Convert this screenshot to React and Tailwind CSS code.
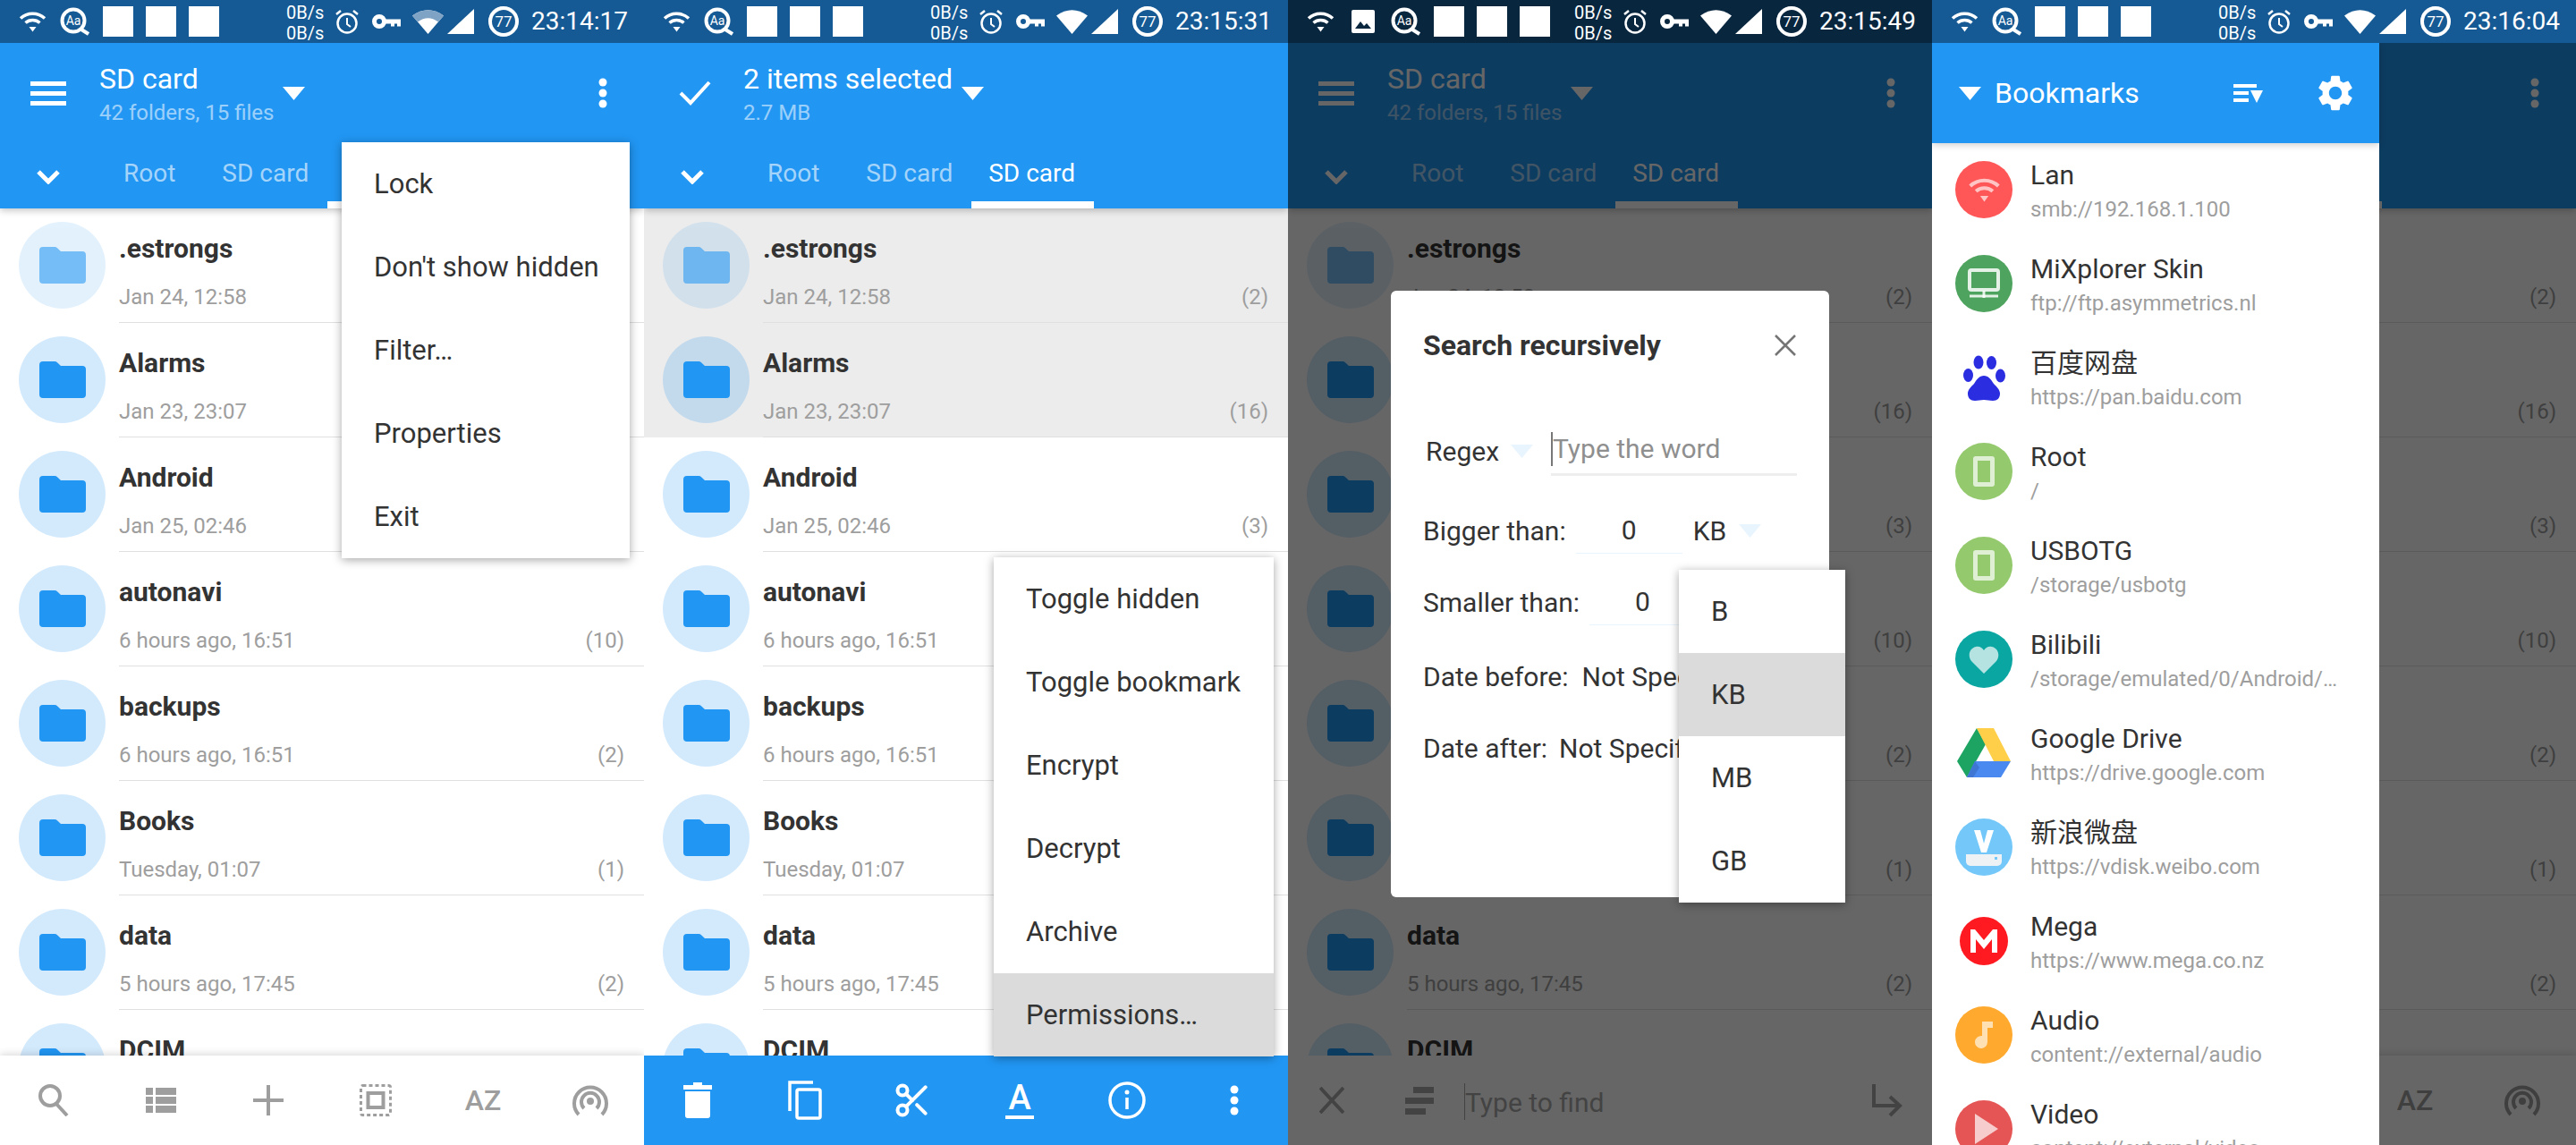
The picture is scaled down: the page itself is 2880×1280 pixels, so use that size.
import { MdSettings } from 'react-icons/md'
import { Scissors } from 'lucide-react'

const folders = [
  { name: '.estrongs', date: 'Jan 24, 12:58', count: '(2)', hidden: true },
  { name: 'Alarms', date: 'Jan 23, 23:07', count: '(16)' },
  { name: 'Android', date: 'Jan 25, 02:46', count: '(3)' },
  { name: 'autonavi', date: '6 hours ago, 16:51', count: '(10)' },
  { name: 'backups', date: '6 hours ago, 16:51', count: '(2)' },
  { name: 'Books', date: 'Tuesday, 01:07', count: '(1)' },
  { name: 'data', date: '5 hours ago, 17:45', count: '(2)' },
  { name: 'DCIM', date: '', count: '' },
]

function WifiIcon({ className = 'text-white', w = 31, h = 24 }) {
  return (
    <svg width={w} height={h} viewBox="0 0 31 24" fill="none" stroke="currentColor" className={className}>
      <path d="M2 8.5C9.5 1.5 21.5 1.5 29 8.5" strokeWidth="3.5" />
      <path d="M7.5 13.5C12 9.5 19 9.5 23.5 13.5" strokeWidth="3.5" />
      <path d="M11.5 18h8l-4 5.5z" fill="currentColor" stroke="none" />
    </svg>
  )
}

function AaIcon() {
  return (
    <svg width="34" height="32" viewBox="0 0 34 32" fill="none" className="shrink-0">
      <circle cx="15" cy="15" r="12.5" stroke="white" strokeWidth="4" />
      <path d="M24 25l8 5" stroke="white" strokeWidth="4" />
      <text x="15" y="20" textAnchor="middle" fontSize="14" fill="white">Aa</text>
    </svg>
  )
}

function StatusBar({ time, dark, fanDim, extra }) {
  return (
    <div className={`flex h-12 shrink-0 items-center pl-[21px] ${dark ? 'bg-[#09263f]' : 'bg-[#155a94]'}`}>
      <WifiIcon />
      <div className="ml-[15px] flex items-center gap-[14px]">
        {extra && (
          <svg width="34" height="26" viewBox="0 0 34 26" className="shrink-0">
            <rect x="4" width="26" height="26" rx="2" fill="white" />
            <path d="M8 21l6-8 4 5 3-3 5 6z" fill="#09263f" />
          </svg>
        )}
        <AaIcon />
        <div className="h-[34px] w-[34px] bg-white" />
        <div className="h-[34px] w-[34px] bg-white" />
        <div className="h-[34px] w-[34px] bg-white" />
      </div>
      <div className={`flex w-[42px] flex-col pt-[4px] text-[20px] leading-[23px] text-white ${extra ? 'ml-[27px]' : 'ml-[75px]'}`}>
        <span>0B/s</span>
        <span>0B/s</span>
      </div>
      <svg width="28" height="28" viewBox="0 0 28 28" fill="none" stroke="white" className="ml-[12px]">
        <circle cx="14" cy="16" r="10.5" strokeWidth="2.5" />
        <path d="M14 10v7l4 3" strokeWidth="2" />
        <path d="M2 6l5-4M26 6l-5-4" strokeWidth="2.5" />
      </svg>
      <svg width="32" height="16" viewBox="0 0 32 16" className="ml-[14px]">
        <circle cx="8" cy="8" r="5.500" fill="none" stroke="white" strokeWidth="5" />
        <path d="M14 5.500h18v8h-4v-3h-3v3h-4v-3h-7z" fill="white" />
      </svg>
      <svg width="35" height="28" viewBox="0 0 35 28" className="ml-[13px]">
        <path d="M0 7.5Q17.5-5 35 7.5L17.5 28z" fill="white" />
        {fanDim && <path d="M0 7.5Q17.5-5 35 7.5L29 14.5Q17.5 6 6 14.5z" fill="#7fa3c4" />}
      </svg>
      <svg width="30" height="28" viewBox="0 0 30 28" className="ml-[4px]">
        <path d="M30 0v28H0z" fill="white" />
      </svg>
      <svg width="34" height="34" viewBox="0 0 34 34" fill="none" className="ml-[16px]">
        <circle cx="17" cy="17" r="15" stroke="white" strokeWidth="4" />
        <path d="M2 17A15 15 0 0 1 17 2" stroke="white" strokeOpacity="0.45" strokeWidth="4" />
        <text x="17" y="23" textAnchor="middle" fontSize="17" fill="white">77</text>
      </svg>
      <span className="ml-[14px] w-[110px] text-[28px] leading-none text-white">{time}</span>
    </div>
  )
}

function Triangle({ className }) {
  return (
    <svg width="25" height="15" viewBox="0 0 25 15" className={className}>
      <path d="M0 0h25L12.5 15z" fill="currentColor" />
    </svg>
  )
}

function Dots({ className = 'text-white' }) {
  return (
    <svg width="10" height="34" viewBox="0 0 10 34" className={className}>
      <circle cx="5" cy="5" r="4.5" fill="currentColor" />
      <circle cx="5" cy="17" r="4.5" fill="currentColor" />
      <circle cx="5" cy="29" r="4.5" fill="currentColor" />
    </svg>
  )
}

function ActionBar({ title, sub, selecting }) {
  return (
    <div className="relative z-10 flex h-[185px] shrink-0 flex-col bg-[#2196f3] text-white shadow-[0_2px_8px_rgba(0,0,0,0.25)]">
      <div className="flex h-[112px] items-center">
        <div className={`flex w-[111px] justify-center ${selecting ? 'pl-[2px]' : 'pr-[3px]'}`}>
          {selecting ? (
            <svg width="36" height="28" viewBox="0 0 36 28" fill="none" stroke="white" strokeWidth="4">
              <path d="M2 14l11 11L34 2" />
            </svg>
          ) : (
            <div className="flex w-10 flex-col gap-[6px]">
              <div className="h-[5px] bg-white" />
              <div className="h-[5px] bg-white" />
              <div className="h-[5px] bg-white" />
            </div>
          )}
        </div>
        <div className="flex flex-col">
          <span className="text-[32px] leading-[40px]">{title}</span>
          <span className="mt-[3px] text-[24px] leading-[30px] text-white/55">{sub}</span>
        </div>
        <Triangle className="ml-[10px] text-white" />
        {!selecting && <Dots className="ml-auto mr-[41px] text-white" />}
      </div>
      <div className="flex h-[73px]">
        <div className="flex w-[118px] justify-center pr-[10px] pt-[30px]">
          <svg width="26" height="16" viewBox="0 0 26 16" fill="none" stroke="white" strokeWidth="5">
            <path d="M2 2l11 11L24 2" />
          </svg>
        </div>
        <div className="mr-[13px] px-5 pt-[14px] text-[28px] leading-[40px] text-white/60">Root</div>
        <div className="pl-[19px] pr-[21px] pt-[14px] text-[28px] leading-[40px] text-white/60">SD card</div>
        <div className="flex flex-col justify-between">
          <div className="pl-[19px] pr-[21px] pt-[14px] text-[28px] leading-[40px]">SD card</div>
          <div className="h-2 bg-white" />
        </div>
      </div>
    </div>
  )
}

function FolderIcon() {
  return (
    <svg width="52" height="41" viewBox="0 0 52 41">
      <path
        d="M4 0h13a4 4 0 0 1 3 1.3L24 5h24a4 4 0 0 1 4 4v28a4 4 0 0 1-4 4H4a4 4 0 0 1-4-4V4a4 4 0 0 1 4-4z"
        fill="#2196f3"
      />
    </svg>
  )
}

function FileRow({ item, selected }) {
  return (
    <div className={`flex h-[128px] shrink-0 ${selected ? 'bg-[#ececec]' : 'bg-white'}`}>
      <div className="ml-[21px] mt-[15px] flex h-[97px] w-[97px] shrink-0 items-center justify-center rounded-full bg-[#2196f3]/20" style={{ opacity: item.hidden ? 0.62 : 1 }}>
        <FolderIcon />
      </div>
      <div className="ml-[15px] flex flex-1 flex-col border-b border-[#e0e0e0] pt-[25px] pr-[22px]">
        <span className="text-[30px] font-bold leading-[40px] text-[#333]">{item.name}</span>
        <div className="mt-[18px] flex justify-between text-[24px] leading-[32px] text-[#9e9e9e]">
          <span>{item.date}</span>
          <span>{item.count}</span>
        </div>
      </div>
    </div>
  )
}

function FileList({ selected }) {
  return (
    <div className="flex flex-1 flex-col overflow-hidden">
      {folders.map((f, i) => (
        <FileRow key={f.name} item={f} selected={selected && i < 2} />
      ))}
    </div>
  )
}

function BottomBar({ blue, children }) {
  return (
    <div className={`relative z-10 grid h-[100px] shrink-0 grid-cols-6 items-center justify-items-center ${blue ? 'bg-[#2196f3] text-white' : 'bg-white text-[#9e9e9e] shadow-[0_-2px_8px_rgba(0,0,0,0.14)]'}`}>
      {children}
    </div>
  )
}

function ToolsBar() {
  return (
    <BottomBar>
      <svg width="36" height="36" viewBox="0 0 36 36" fill="none" stroke="currentColor" strokeWidth="4" className="mr-[1px]">
        <circle cx="14" cy="13" r="11" />
        <path d="M21 22l12 13" />
      </svg>
      <svg width="34" height="28" viewBox="0 0 34 28" fill="currentColor">
        <path d="M0 0h8v8H0zM11 0h23v8H11zM0 10h8v8H0zM11 10h23v8H11zM0 20h8v8H0zM11 20h23v8H11z" />
      </svg>
      <svg width="34" height="34" viewBox="0 0 34 34" stroke="currentColor" strokeWidth="4">
        <path d="M17 0v34M0 17h34" />
      </svg>
      <svg width="36" height="36" viewBox="0 0 36 36" fill="none" stroke="currentColor" strokeWidth="3">
        <rect x="1.5" y="1.5" width="33" height="33" rx="2" strokeDasharray="4 3" />
        <rect x="9.5" y="10" width="17" height="16" strokeWidth="4" />
      </svg>
      <span className="text-[32px] font-medium leading-none">AZ</span>
      <svg width="40" height="38" viewBox="0 0 40 38" fill="none" stroke="currentColor" strokeWidth="4">
        <path d="M7 35A18 18 0 1 1 33 35" />
        <path d="M13 28A10 10 0 1 1 27 28" />
        <circle cx="20" cy="20" r="4" fill="currentColor" stroke="none" />
      </svg>
    </BottomBar>
  )
}

function ActionsBar() {
  return (
    <BottomBar blue>
      <svg width="32" height="40" viewBox="0 0 32 40" fill="white">
        <path d="M11 0h10v3h11v5H0V3h11zM2 10h28v27a3 3 0 0 1-3 3H5a3 3 0 0 1-3-3z" />
      </svg>
      <svg width="38" height="44" viewBox="0 0 38 44" fill="none" stroke="white" strokeWidth="3.5">
        <path d="M2 34V2h26" />
        <rect x="10" y="10" width="26" height="32" rx="2" />
      </svg>
      <Scissors size={44} strokeWidth={2.2} color="white" />
      <div className="flex flex-col items-center">
        <span className="text-[38px] font-medium leading-[36px] text-white">A</span>
        <div className="mt-[2px] h-[4px] w-8 bg-white" />
      </div>
      <svg width="42" height="42" viewBox="0 0 42 42" fill="none" stroke="white" strokeWidth="3.5">
        <circle cx="21" cy="21" r="19" />
        <path d="M21 18v13" />
        <circle cx="21" cy="12" r="2.5" fill="white" stroke="none" />
      </svg>
      <Dots className="text-white" />
    </BottomBar>
  )
}

function FindBar() {
  return (
    <div className="relative z-10 flex h-[100px] shrink-0 items-center bg-white text-[#a8a8a8]">
      <svg width="28" height="30" viewBox="0 0 28 30" stroke="currentColor" strokeWidth="4" className="ml-[35px]">
        <path d="M1 1l26 28M27 1L1 29" />
      </svg>
      <div className="ml-[68px] flex w-8 flex-col items-end gap-[5px]">
        <div className="h-[7px] w-[23px] bg-current" />
        <div className="h-[7px] w-8 bg-current" />
        <div className="h-[7px] w-[23px] self-start bg-current" />
      </div>
      <div className="ml-[34px] mt-[3px] h-[41px] w-[1px] bg-current" />
      <span className="pt-[6px] text-[30px] leading-[40px]">Type to find</span>
      <svg width="34" height="37" viewBox="0 0 34 37" fill="none" stroke="currentColor" strokeWidth="4" className="ml-auto mr-[33px]">
        <path d="M2 0v24h28M20 14l11 10-11 11" />
      </svg>
    </div>
  )
}

function Menu({ items, active, className }) {
  return (
    <div className={`absolute z-20 flex flex-col bg-white text-[31px] text-[#333] shadow-[0_2px_10px_rgba(0,0,0,0.35)] ${className}`}>
      {items.map((t) => (
        <div key={t} className={`flex h-[93px] items-center pl-[36px] pt-[2px] ${t === active ? 'bg-[#dbdbdb]' : ''}`}>
          {t}
        </div>
      ))}
    </div>
  )
}

function SearchDialog() {
  return (
    <div className="absolute left-[115px] top-[277px] z-20 h-[678px] w-[490px] overflow-hidden rounded-[6px] bg-white pl-[36px] text-[30px] text-[#333]">
      <div className="mt-[41px] flex h-10 items-center justify-between pr-[37px]">
        <span className="text-[32px] font-bold leading-none">Search recursively</span>
        <svg width="24" height="24" viewBox="0 0 24 24" stroke="#757575" strokeWidth="2.5">
          <path d="M1 1l22 22M23 1L1 23" />
        </svg>
      </div>
      <div className="mt-[68px] flex h-[60px] items-start">
        <div className="ml-[3px] flex h-[60px] w-[140px] items-center gap-[13px]">
          <span>Regex</span>
          <Triangle className="text-[#e8f4fe]" />
        </div>
        <div className="flex h-[58px] w-[275px] items-center border-b-[3px] border-[#eee]">
          <div className="h-[38px] w-[2px] bg-[#777]" />
          <span className="text-[#8f8f8f]">Type the word</span>
        </div>
      </div>
      <div className="mt-[29px] flex h-[60px] items-center">
        <span>Bigger than:</span>
        <div className="ml-[11px] flex h-[52px] w-[119px] items-center justify-center border-b border-[#e8f4fe]">0</div>
        <span className="ml-[12px]">KB</span>
        <Triangle className="ml-[14px] text-[#e8f4fe]" />
      </div>
      <div className="mt-[20px] flex h-[60px] items-center">
        <span>Smaller than:</span>
        <div className="ml-[11px] flex h-[52px] w-[119px] items-center justify-center border-b border-[#e8f4fe]">0</div>
      </div>
      <div className="mt-[23px] flex h-[60px] items-center gap-[15px] whitespace-nowrap">
        <span>Date before:</span>
        <span>Not Specified</span>
      </div>
      <div className="mt-[20px] flex h-[60px] items-center gap-[13px] whitespace-nowrap">
        <span>Date after:</span>
        <span>Not Specified</span>
      </div>
    </div>
  )
}

const bookmarks = [
  {
    name: 'Lan', sub: 'smb://192.168.1.100', bg: 'bg-[#ff5757]',
    icon: (
      <svg width="37" height="28" viewBox="0 0 31 24" fill="none" stroke="white" strokeOpacity="0.65">
        <path d="M2 8.5C9.5 1.5 21.5 1.5 29 8.5" strokeWidth="3.5" />
        <path d="M7.5 13.5C12 9.5 19 9.5 23.5 13.5" strokeWidth="3.5" />
        <path d="M11.5 18h8l-4 5.5z" fill="white" fillOpacity="0.65" stroke="none" />
      </svg>
    ),
  },
  {
    name: 'MiXplorer Skin', sub: 'ftp://ftp.asymmetrics.nl', bg: 'bg-[#4ea35e]',
    icon: (
      <svg width="36" height="34" viewBox="0 0 36 34" fill="none" stroke="white" strokeOpacity="0.85">
        <rect x="2" y="2" width="32" height="22" rx="2" strokeWidth="4" />
        <path d="M2 31h32" strokeWidth="3" />
        <path d="M18 25v8" strokeWidth="3" />
      </svg>
    ),
  },
  {
    name: '百度网盘', sub: 'https://pan.baidu.com', bg: '',
    icon: (
      <svg width="64" height="64" viewBox="0 0 64 64" fill="#2b2ee0">
        <ellipse cx="26" cy="15" rx="5.5" ry="7.5" />
        <ellipse cx="40.5" cy="15.5" rx="5.5" ry="7.5" />
        <ellipse cx="14.5" cy="29.5" rx="5.5" ry="7.5" />
        <ellipse cx="50.5" cy="30" rx="5.5" ry="7.5" />
        <path d="M32 30c5 0 8 4 11 9 4 4 7 7 7 11 0 5-3 8-8 8-4 0-6-1-10-1s-6 1-10 1c-5 0-8-3-8-8 0-4 3-7 7-11 3-5 6-9 11-9z" />
      </svg>
    ),
  },
  {
    name: 'Root', sub: '/', bg: 'bg-[#94c96d]',
    icon: <div className="h-[34px] w-6 rounded-[3px] border-[5px] border-white/70" />,
  },
  {
    name: 'USBOTG', sub: '/storage/usbotg', bg: 'bg-[#94c96d]',
    icon: <div className="h-[34px] w-6 rounded-[3px] border-[5px] border-white/70" />,
  },
  {
    name: 'Bilibili', sub: '/storage/emulated/0/Android/…', bg: 'bg-[#0aa6a2]',
    icon: (
      <svg width="34" height="31" viewBox="0 0 34 31" fill="#b5e3e1">
        <path d="M17 31L3 17C-1 12 0 3 8 1c4-1 7 1 9 4 2-3 5-5 9-4 8 2 9 11 5 16z" />
      </svg>
    ),
  },
  {
    name: 'Google Drive', sub: 'https://drive.google.com', bg: '',
    icon: (
      <svg width="60" height="56" viewBox="0 0 60 56">
        <path d="M22 0l10 18-21 37L0 37z" fill="#1da462" />
        <path d="M22 0h19l19 37H41z" fill="#ffcf4a" />
        <path d="M20 37h40L49 55H11z" fill="#4a8af0" />
        <path d="M20 37l5 7-7 11h-7z" fill="#3f76d4" />
      </svg>
    ),
  },
  {
    name: '新浪微盘', sub: 'https://vdisk.weibo.com', bg: 'bg-[#74c8f9]',
    icon: (
      <svg width="64" height="64" viewBox="0 0 64 64">
        <path d="M21 13h7l4 15 4-15h7l-8 25h-6z" fill="white" />
        <path d="M12 40h40v8a5 5 0 0 1-5 5H17a5 5 0 0 1-5-5z" fill="#eef2f4" />
        <rect x="44" y="43" width="3" height="3" fill="#74c8f9" />
      </svg>
    ),
  },
  {
    name: 'Mega', sub: 'https://www.mega.co.nz', bg: '',
    icon: (
      <div className="flex h-[54px] w-[54px] items-center justify-center rounded-full bg-[#ff1a22]">
        <svg width="30" height="26" viewBox="0 0 30 26" fill="white">
          <path d="M0 0h5l10 12L25 0h5v26h-6V11l-9 11-9-11v15H0z" />
        </svg>
      </div>
    ),
  },
  {
    name: 'Audio', sub: 'content://external/audio', bg: 'bg-[#ffa92e]',
    icon: (
      <svg width="20" height="30" viewBox="0 0 20 30" fill="#ffe0b2">
        <path d="M8 0h12v7h-6v16a7 7 0 1 1-6-6.900z" />
      </svg>
    ),
  },
  {
    name: 'Video', sub: 'content://external/video', bg: 'bg-[#e55555]',
    icon: (
      <svg width="26" height="34" viewBox="0 0 26 34" fill="#f6cccc" className="ml-[6px]">
        <path d="M0 0l26 17L0 34z" />
      </svg>
    ),
  },
]

function BookmarkRow({ item }) {
  return (
    <div className="flex h-[105px] shrink-0 pl-[26px]">
      <div className={`flex h-16 w-16 shrink-0 items-center justify-center rounded-full ${item.bg}`}>{item.icon}</div>
      <div className="-mt-[2px] ml-[20px] flex flex-col">
        <span className="text-[30px] leading-[36px] text-[#333]">{item.name}</span>
        <span className="mt-[5px] text-[24px] leading-[30px] text-[#9e9e9e]">{item.sub}</span>
      </div>
    </div>
  )
}

function Drawer() {
  return (
    <div className="absolute bottom-0 left-0 top-0 z-20 flex w-[500px] flex-col bg-white">
      <div className="relative z-10 flex h-[112px] shrink-0 items-center bg-[#2196f3] pl-[30px] pr-[25px] text-white shadow-[0_2px_8px_rgba(0,0,0,0.2)]">
        <Triangle className="text-white" />
        <span className="ml-[15px] text-[32px] leading-[40px]">Bookmarks</span>
        <svg width="33" height="22" viewBox="0 0 33 22" className="ml-auto">
          <path d="M0 1h26v4H0zM0 9h17v4H0zM0 17h17v4H0zM19 8h14l-7 14z" fill="white" />
        </svg>
        <MdSettings size={48} className="ml-[57px]" />
      </div>
      <div className="flex flex-1 flex-col overflow-hidden pt-[20px]">
        {bookmarks.map((b) => (
          <BookmarkRow key={b.name} item={b} />
        ))}
      </div>
    </div>
  )
}

function Screen({ children }) {
  return <div className="relative flex h-[1280px] w-[720px] shrink-0 flex-col overflow-hidden bg-white">{children}</div>
}

export default function App() {
  return (
    <div className="flex h-[1280px] w-[2880px] overflow-hidden bg-white font-['Roboto','Noto_Sans_CJK_SC',sans-serif]">
      <Screen>
        <StatusBar time="23:14:17" fanDim />
        <div className="relative flex flex-1 flex-col overflow-hidden">
          <ActionBar title="SD card" sub="42 folders, 15 files" />
          <FileList />
          <ToolsBar />
          <Menu className="left-[382px] top-[111px] w-[322px]" items={['Lock', "Don't show hidden", 'Filter…', 'Properties', 'Exit']} />
        </div>
      </Screen>

      <Screen>
        <StatusBar time="23:15:31" />
        <div className="relative flex flex-1 flex-col overflow-hidden">
          <ActionBar title="2 items selected" sub="2.7 MB" selecting />
          <FileList selected />
          <ActionsBar />
          <Menu
            className="left-[391px] top-[575px] w-[313px]"
            active="Permissions…"
            items={['Toggle hidden', 'Toggle bookmark', 'Encrypt', 'Decrypt', 'Archive', 'Permissions…']}
          />
        </div>
      </Screen>

      <Screen>
        <StatusBar time="23:15:49" dark extra />
        <div className="relative flex flex-1 flex-col overflow-hidden">
          <ActionBar title="SD card" sub="42 folders, 15 files" />
          <FileList />
          <FindBar />
          <div className="absolute inset-0 z-10 bg-black/60" />
          <SearchDialog />
          <Menu className="left-[437px] top-[589px] w-[186px]" active="KB" items={['B', 'KB', 'MB', 'GB']} />
        </div>
      </Screen>

      <Screen>
        <StatusBar time="23:16:04" />
        <div className="relative flex flex-1 flex-col overflow-hidden">
          <ActionBar title="SD card" sub="42 folders, 15 files" />
          <FileList />
          <ToolsBar />
          <div className="absolute inset-0 z-10 bg-black/60" />
          <Drawer />
        </div>
      </Screen>
    </div>
  )
}
